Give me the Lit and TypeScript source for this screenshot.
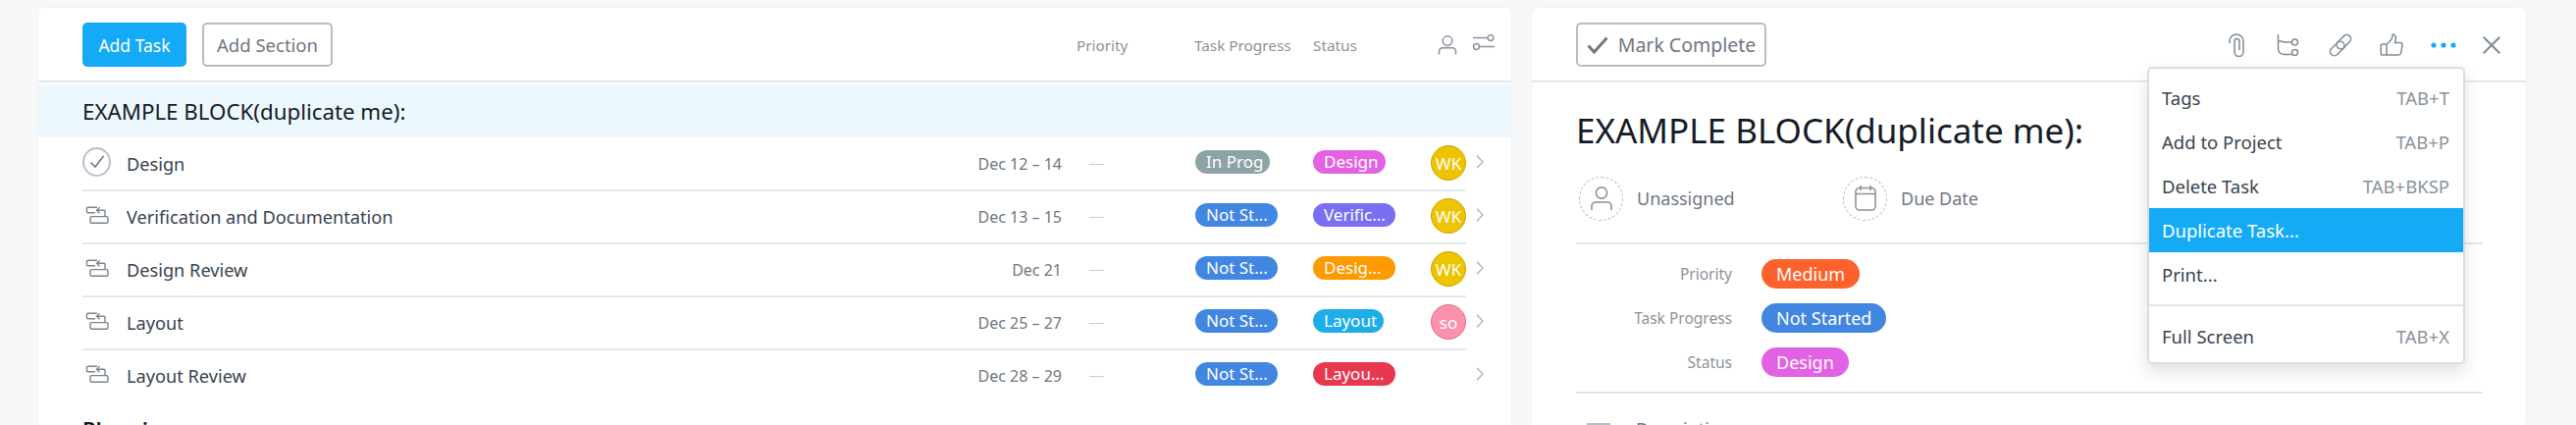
import { LitElement, html, css } from "lit";
import { customElement } from "lit/decorators.js";

const subtask = html`<svg class="sub" width="24" height="18" viewBox="0 0 24 18" fill="none" stroke="#7a848e" stroke-width="1.4"><path d="M12 1.200H2.500a1 1 0 0 0-1 1v3.600a1 1 0 0 0 1 1H10"/><rect x="5" y="10.600" width="18" height="6.600" rx="1.500"/><path d="M20 10.600V5.200a1 1 0 0 0-1-1h-7.500M14.500 1.200l-3 3 3 3"/></svg>`;
const chevron = html`<svg width="8" height="14" viewBox="0 0 8 14" fill="none" stroke="#a9b2ba" stroke-width="1.300"><path d="M1 .7 7 7l-6 6.300"/></svg>`;

const rows = [
  ["Design", "Dec 12 – 14", "In Prog", "#8da3a6", 76, "Design", "#e362e3", 74, "WK", "#eec300", "#c9a500", true],
  ["Verification and Documentation", "Dec 13 – 15", "Not St...", "#4186e0", 84, "Verific...", "#7a6ff0", 84, "WK", "#eec300", "#c9a500", false],
  ["Design Review", "Dec 21", "Not St...", "#4186e0", 84, "Desig...", "#fd9a00", 84, "WK", "#eec300", "#c9a500", false],
  ["Layout", "Dec 25 – 27", "Not St...", "#4186e0", 84, "Layout", "#1fade8", 72, "so", "#fc91ad", "#d9708c", false],
  ["Layout Review", "Dec 28 – 29", "Not St...", "#4186e0", 84, "Layou...", "#e8384f", 84, "", "", "", false],
] as const;

const menu = [
  ["Tags", "TAB+T"],
  ["Add to Project", "TAB+P"],
  ["Delete Task", "TAB+BKSP"],
  ["Duplicate Task...", "", "on"],
  ["Print...", ""],
];

@customElement("app-root")
export class AppRoot extends LitElement {
  static styles = css`
    :host { display: block; height: 433px; overflow: hidden; background: #f6f8f9; font-family: "Noto Sans", "Open Sans", sans-serif; color: #38434f; }
    * { box-sizing: border-box; }
    .page { display: flex; gap: 21px; padding: 8px 0 0 39px; height: 433px; }
    .card { background: #fff; border-radius: 6px 6px 0 0; height: 425px; overflow: hidden; flex: none; box-shadow: 0 0 2px rgba(110,120,130,.12); }
    .left { width: 1501px; }
    .right { width: 1013px; position: relative; overflow: visible; }
    .bar { height: 76px; border-bottom: 2px solid #e2e7ea; display: flex; align-items: flex-start; padding: 15px 0 0 45px; }
    .left .bar { margin-bottom: 2px; }
    .btn { height: 45px; border-radius: 5px; display: flex; align-items: center; justify-content: center; font-size: 17.500px; white-space: nowrap; }
    .primary { width: 106px; background: #14aaf5; color: #fff; }
    .ghost { border: 2px solid #b5bec6; color: #6f7782; background: #fff; }
    .add { width: 133px; margin-left: 16px; font-size: 18.500px; }
    .cols { margin-left: auto; display: grid; grid-template-columns: 120px 121px 127px 35px 40px; align-items: center; height: 45px; font-size: 15.300px; color: #8a939c; }
    .cols svg { display: block; }
    .band { height: 54px; background: #edf8fe; display: flex; align-items: center; padding-left: 45px; font-size: 22.300px; color: #151b26; margin-bottom: 1px; }
    .row { display: flex; margin-left: 45px; height: 54px; }
    .main { width: 1410px; display: grid; grid-template-columns: 45px 1fr 150px 136px 120px 120px 36px; align-items: center; border-bottom: 2px solid #e2e7ea; }
    .main.end { border-bottom: 0; padding-bottom: 2px; }
    .name { font-size: 18.200px; }
    .date { font-size: 16px; color: #6f7782; text-align: right; }
    .dash { width: 15px; height: 1px; background: #c6ccd2; margin-left: 28px; }
    .pill { height: 24px; border-radius: 12px; color: #fff; font-size: 17px; line-height: 24px; padding-left: 11px; margin-top: -4px; white-space: nowrap; }
    .avatar { width: 36px; height: 36px; border-radius: 50%; display: flex; align-items: center; justify-content: center; color: #fff; font-size: 17px; border: 1.500px solid; margin-top: -2px; }
    .chev { width: 44px; padding-left: 10px; display: flex; align-items: center; padding-bottom: 6px; }
    .check { width: 29px; height: 30px; border-radius: 50%; border: 2px solid #b9c1c9; display: flex; align-items: center; justify-content: center; margin-top: -4px; }
    .sub { display: block; margin-left: 3px; margin-top: -4px; }
    .section { margin: 11px 0 0 45px; font-size: 22px; font-weight: 600; color: #151b26; }

    .mark { width: 194px; gap: 10px; font-size: 19.500px; }
    .tools { margin-left: auto; display: flex; align-items: center; height: 45px; padding-right: 26px; }
    .tools svg { display: block; flex: none; }
    .body { padding: 0 44px 0 45px; }
    h1 { margin: 0; font-size: 35px; font-weight: 400; color: #151b26; height: 95px; line-height: 98px; white-space: nowrap; }
    .meta { display: grid; grid-template-columns: 269px 1fr; height: 70px; border-bottom: 2px solid #e2e7ea; align-items: start; margin-bottom: 15px; }
    .who { display: flex; align-items: center; font-size: 18px; color: #6f7782; gap: 14px; padding-left: 3px; height: 46px; }
    .ring { width: 45px; height: 45px; border-radius: 50%; border: 1.500px dashed #b2bac1; display: flex; align-items: center; justify-content: center; flex: none; }
    .field { display: grid; grid-template-columns: 159px auto 1fr; column-gap: 30px; align-items: center; height: 30px; margin-bottom: 15px; font-size: 15.500px; color: #8a939c; }
    .field span:first-child { text-align: right; }
    .tag { height: 30px; border-radius: 15px; color: #fff; font-size: 18px; line-height: 30px; padding: 0 15px; }
    .rule { border-top: 2px solid #e2e7ea; }
    .desc { display: flex; align-items: flex-start; gap: 26px; margin: 24px 0 0 11px; font-size: 18px; color: #6f7782; }
    .dicon { width: 24px; height: 2px; background: #b5bec6; margin-top: 6px; }

    .menu { position: absolute; left: 627px; top: 60px; width: 324px; height: 303px; background: #fff; border: 2px solid #d7dde1; border-radius: 5px; box-shadow: 0 8px 16px rgba(60,70,80,.16); padding-top: 7px; }
    .item { height: 45px; display: flex; align-items: center; justify-content: space-between; padding: 0 14px 0 13px; font-size: 18.500px; color: #38434f; }
    .item em { font-style: normal; color: #8a939c; }
    .item.on { background: #14aaf5; color: #fff; }
    .sep { border-top: 2px solid #e2e7ea; margin-top: 8px; margin-bottom: 8px; }
  `;

  render() {
    return html`<div class="page">
      <section class="card left">
        <div class="bar">
          <div class="btn primary">Add Task</div>
          <div class="btn ghost add">Add Section</div>
          <div class="cols">
            <span>Priority</span><span>Task Progress</span><span>Status</span>
            <svg width="20" height="20" viewBox="0 0 20 20" fill="none" stroke="#8a939c" stroke-width="1.500"><circle cx="10" cy="5.600" r="4.800"/><path d="M1.500 19.500v-3.200a3.500 3.500 0 0 1 3.500-3.500h10a3.500 3.500 0 0 1 3.500 3.500v3.200"/></svg>
            <svg width="24" height="18" viewBox="0 0 24 18" fill="none" stroke="#8a939c" stroke-width="1.500" style="margin-top:-4px"><path d="M1 3.500h15M8 12.500h15"/><circle cx="19" cy="3.500" r="2.900"/><circle cx="4.500" cy="12.500" r="2.900"/></svg>
          </div>
        </div>
        <div class="band">EXAMPLE BLOCK(duplicate me):</div>
        ${rows.map((r, i) => html`<div class="row">
          <div class="main ${i === rows.length - 1 ? "end" : ""}">
            ${r[11] ? html`<div class="check"><svg width="16" height="14" viewBox="0 0 16 14" fill="none" stroke="#6f7782" stroke-width="1.600"><path d="m1.500 7.500 4.500 4.500 8.500-11"/></svg></div>` : subtask}
            <div class="name">${r[0]}</div>
            <div class="date">${r[1]}</div>
            <div class="dash"></div>
            <div><div class="pill" style="background:${r[3]};width:${r[4]}px">${r[2]}</div></div>
            <div><div class="pill" style="background:${r[6]};width:${r[7]}px">${r[5]}</div></div>
            ${r[8] ? html`<div class="avatar" style="background:${r[9]};border-color:${r[10]}">${r[8]}</div>` : html`<div></div>`}
          </div>
          <div class="chev">${chevron}</div>
        </div>`)}
        <div class="section">Planning</div>
      </section>

      <section class="card right">
        <div class="bar">
          <div class="btn ghost mark">
            <svg width="22" height="18" viewBox="0 0 22 18" fill="none" stroke="#6f7782" stroke-width="3"><path d="m1.500 9.500 6 6.500L20.500 1.500"/></svg>
            <span>Mark Complete</span>
          </div>
          <div class="tools">
            <svg width="16" height="24" viewBox="0 0 16 24" fill="none" stroke="#7f8b95" stroke-width="1.500"><path d="M1 10V8a7 7 0 0 1 14 0v11a4.500 4.500 0 0 1-9 0V8a2.500 2.500 0 0 1 5 0v9"/></svg>
            <svg width="23" height="22" viewBox="0 0 23 22" fill="none" stroke="#7f8b95" stroke-width="1.500" style="margin-left:33px"><path d="M1.500 0v14.500a6 6 0 0 0 6 6h7.500M1.500 7h3.500a6 4 0 0 0 4 1h6"/><circle cx="18.500" cy="8" r="3"/><circle cx="18.500" cy="18.500" r="3"/></svg>
            <svg width="26" height="26" viewBox="0 0 26 26" fill="none" stroke="#7f8b95" stroke-width="1.500" style="margin-left:29px"><rect x="-6.200" y="-4" width="17" height="8.400" rx="4.200" transform="translate(8 18) rotate(-45)"/><rect x="-10.800" y="-4.200" width="17" height="8.400" rx="4.200" transform="translate(18 8) rotate(-45)"/></svg>
            <svg width="24" height="24" viewBox="0 0 24 24" fill="none" stroke="#7f8b95" stroke-width="1.500" style="margin-left:27px"><path d="M7 11v11H2.200a1 1 0 0 1-1-1v-9a1 1 0 0 1 1-1zM7 11c3-2 6-4.500 6.200-10 2.500 0 3.600 2 3 5.200l-.8 3.300h5.400c1.600 0 2.500 1 2.200 2.500l-1.400 8.200c-.3 1.400-1.200 1.800-2.400 1.800H7"/></svg>
            <svg width="26" height="6" viewBox="0 0 26 6" fill="#14aaf5" style="margin-left:28px"><circle cx="3" cy="3" r="2.600"/><circle cx="13" cy="3" r="2.600"/><circle cx="23" cy="3" r="2.600"/></svg>
            <svg width="18" height="18" viewBox="0 0 18 18" fill="none" stroke="#7f8b95" stroke-width="2" style="margin-left:27px"><path d="m.7 .7 16.600 16.600M17.300 .7.7 17.300"/></svg>
          </div>
        </div>
        <div class="body">
          <h1>EXAMPLE BLOCK(duplicate me):</h1>
          <div class="meta">
            <div class="who"><div class="ring"><svg width="22" height="25" viewBox="0 0 22 25" fill="none" stroke="#8a939c" stroke-width="1.600"><circle cx="11" cy="6.500" r="5.600"/><path d="M1 24v-4a4 4 0 0 1 4-4h12a4 4 0 0 1 4 4v4"/></svg></div>Unassigned</div>
            <div class="who"><div class="ring"><svg width="22" height="26" viewBox="0 0 22 26" fill="none" stroke="#8a939c" stroke-width="1.600"><rect x="1" y="2.500" width="20" height="22.500" rx="4"/><path d="M1 8.500h20M6 0v5M16 0v5"/></svg></div>Due Date</div>
          </div>
          <div class="field"><span>Priority</span><span class="tag" style="background:#fd612c">Medium</span></div>
          <div class="field"><span>Task Progress</span><span class="tag" style="background:#4186e0">Not Started</span></div>
          <div class="field"><span>Status</span><span class="tag" style="background:#e362e3">Design</span></div>
          <div class="rule"></div>
          <div class="desc"><div class="dicon"></div>Description</div>
        </div>
        <div class="menu">
          ${menu.map((m) => html`<div class="item ${m[2] ?? ""}"><span>${m[0]}</span><em>${m[1]}</em></div>`)}
          <div class="sep"></div>
          <div class="item"><span>Full Screen</span><em>TAB+X</em></div>
        </div>
      </section>
    </div>`;
  }
}
